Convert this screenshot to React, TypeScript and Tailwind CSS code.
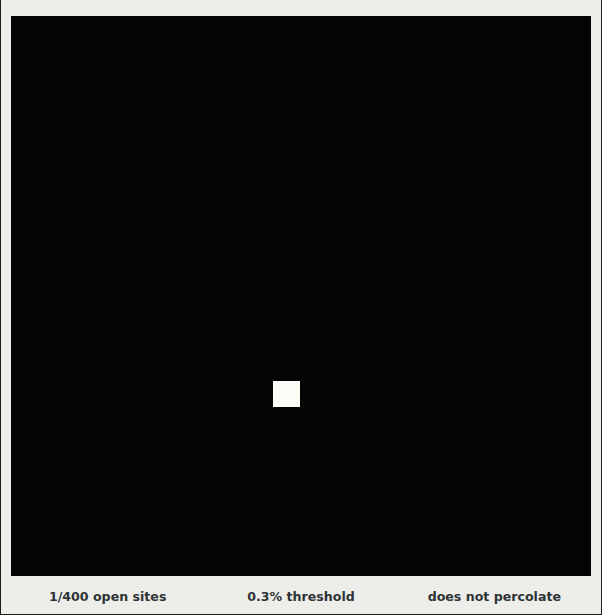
const N = 20;
const openSites = new Set<number>([13 * N + 9]);

const Cell = ({ open }: { open: boolean }) => (
  <div className="p-px">
    {open && <div className="w-full h-full bg-[#fdfdf8]" />}
  </div>
);

export default function App() {
  const count = openSites.size;
  const pct = ((count / (N * N)) * 100).toFixed(1);
  return (
    <div className="w-[602px] h-[615px] bg-[#edeeea] border-x border-b border-[#1c1c1c] flex flex-col pt-[16px] pl-[10px] font-['DejaVu_Sans',sans-serif]">
      <div className="w-[580px] h-[560px] bg-[#050505] grid grid-cols-[repeat(20,29px)] grid-rows-[repeat(20,28px)]">
        {Array.from({ length: N * N }, (_, i) => (
          <Cell key={i} open={openSites.has(i)} />
        ))}
      </div>
      <div className="w-[580px] grid grid-cols-3 mt-[14px] text-[12.6px] leading-[14px] font-bold text-[#2e3436] text-center">
        <span>{count}/{N * N} open sites</span>
        <span>{pct}% threshold</span>
        <span>does not percolate</span>
      </div>
    </div>
  );
}
